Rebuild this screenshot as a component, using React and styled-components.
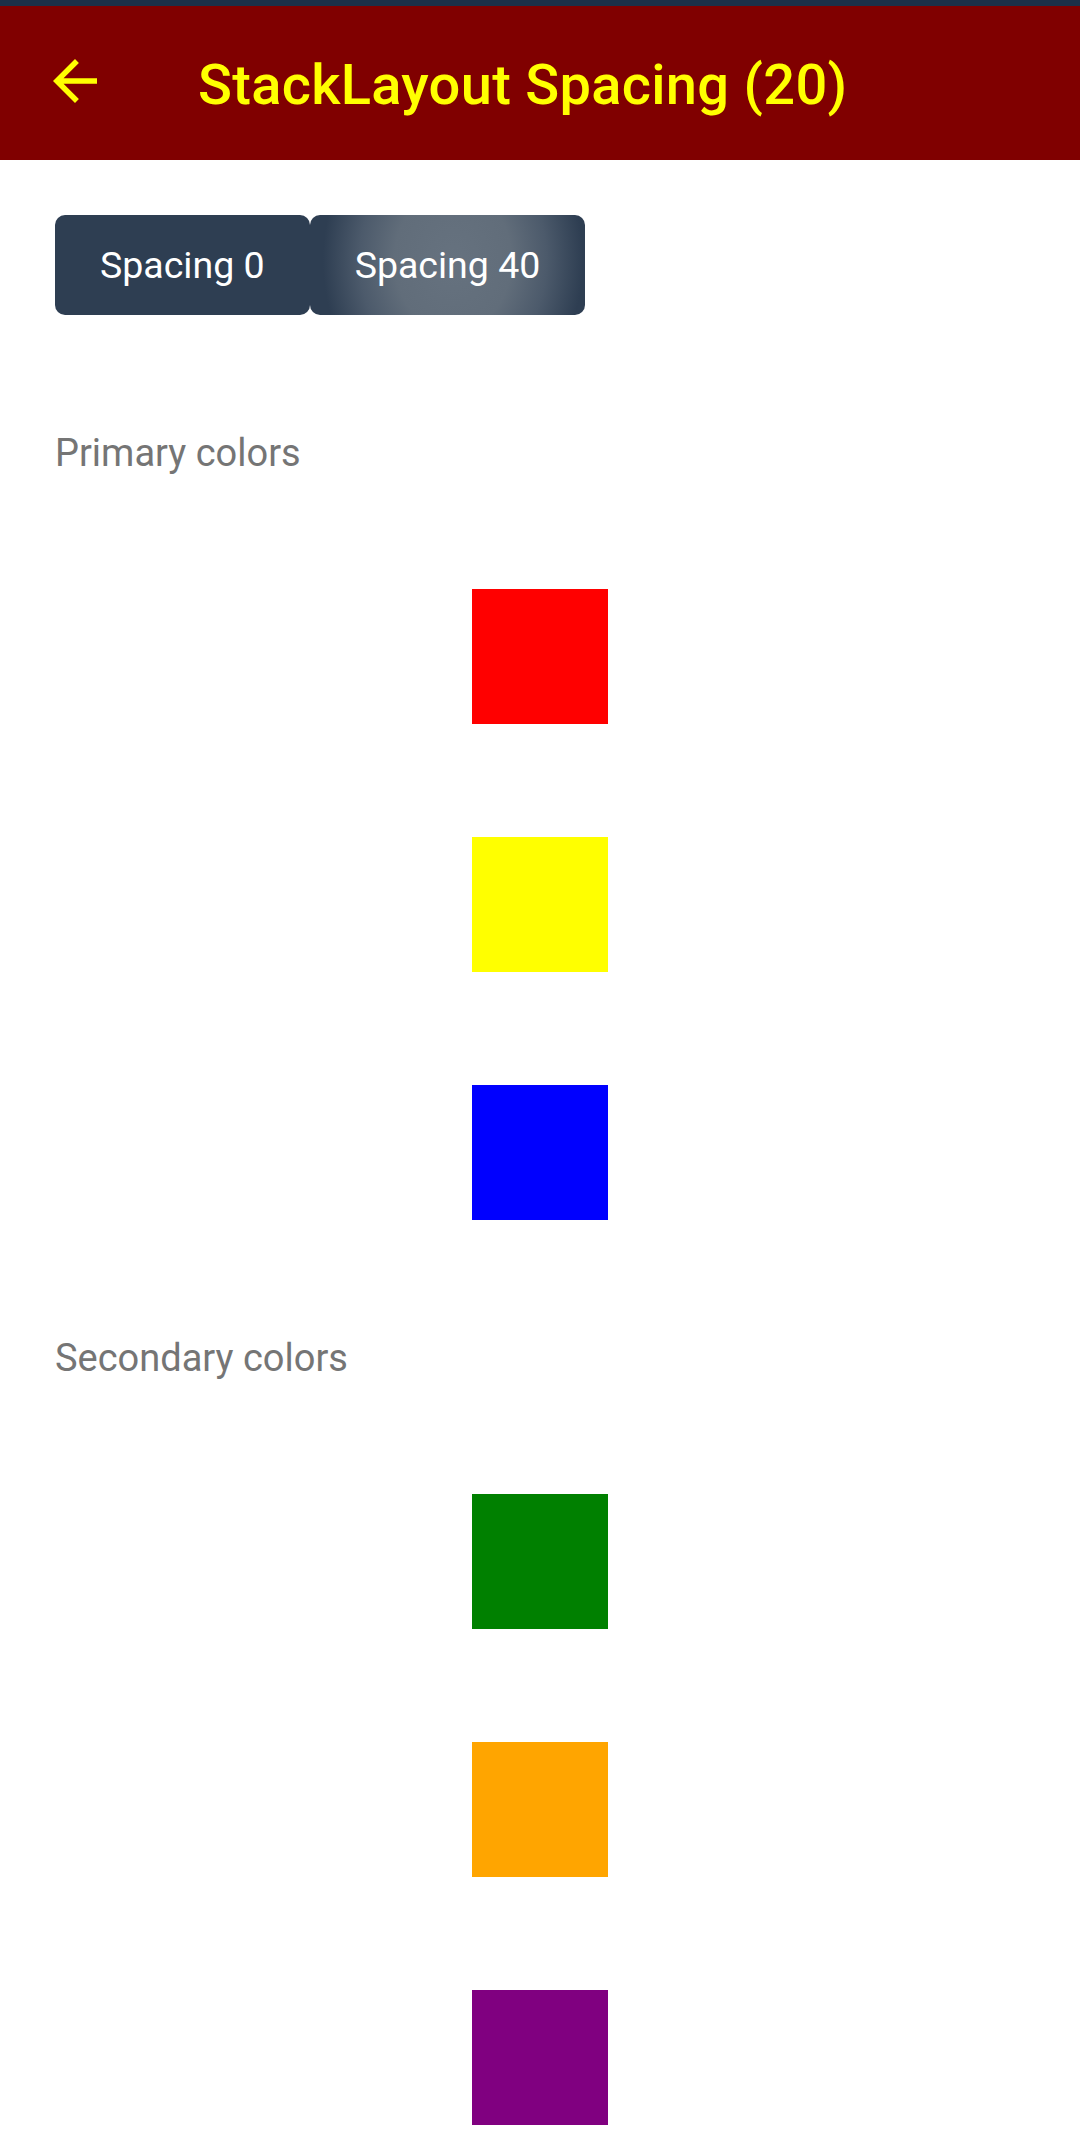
import styled, { createGlobalStyle } from 'styled-components';

const GlobalStyle = createGlobalStyle`
  html, body {
    margin: 0;
    padding: 0;
    background: #ffffff;
    font-family: Roboto, "Noto Sans", "Liberation Sans", sans-serif;
  }
`

const Page = styled.div`
  width: 1080px;
  min-height: 2155px;
  background: #fff;
`

const StatusStrip = styled.div`
  height: 6px;
  background: #1c3049;
`

const Toolbar = styled.header`
  height: 154px;
  background: #800000;
  display: flex;
  align-items: center;
`

const BackButton = styled.div`
  width: 66px;
  height: 66px;
  margin-left: 42px;
  margin-top: -4px;
  display: flex;
  align-items: center;
  justify-content: center;
`

const Title = styled.h1`
  margin: 4px 0 0 90px;
  color: #ffff00;
  font-size: 56px;
  font-weight: 500;
  letter-spacing: 0.3px;
  line-height: 1;
`

const Content = styled.main`
  padding: 55px 55px 0;
  display: flex;
  flex-direction: column;
  gap: 113px;
`

const ButtonRow = styled.div`
  display: flex;
  height: 100px;
`

const SpacingButton = styled.button`
  border: none;
  border-radius: 10px;
  padding: 0 45px;
  height: 100%;
  color: #fff;
  font-family: Roboto, "Liberation Sans", sans-serif;
  font-size: 37.5px;
  font-weight: 400;
  background: ${props => props.pressed
    ? 'radial-gradient(ellipse 130px 160px at 52% 45%, #66727f 0%, #616d7a 45%, #4c5a6b 72%, #2e3e52 100%)'
    : '#2e3e52'};
  cursor: pointer;
`

const Caption = styled.p`
  margin: 3px 0 0;
  color: #757575;
  font-size: 38px;
  line-height: 45px;
  font-weight: 400;
`

const Swatch = styled.div`
  width: 136px;
  height: 135px;
  align-self: center;
  background: ${props => props.color};
`

const primary = ['#ff0000', '#ffff00', '#0000ff']
const secondary = ['#008000', '#ffa500', '#800080']

const ArrowBack = () => (
  <svg width="66" height="66" viewBox="0 0 24 24" fill="#ffff00">
    <path d="M20 11H7.83l5.59-5.59L12 4l-8 8 8 8 1.41-1.41L7.83 13H20v-2z" />
  </svg>
)

const App = () => {
  return (
    <Page>
      <GlobalStyle />
      <StatusStrip />
      <Toolbar>
        <BackButton>
          <ArrowBack />
        </BackButton>
        <Title>StackLayout Spacing (20)</Title>
      </Toolbar>
      <Content>
        <ButtonRow>
          <SpacingButton>Spacing 0</SpacingButton>
          <SpacingButton pressed>Spacing 40</SpacingButton>
        </ButtonRow>
        <Caption>Primary colors</Caption>
        {primary.map(c => <Swatch key={c} color={c} />)}
        <Caption>Secondary colors</Caption>
        {secondary.map(c => <Swatch key={c} color={c} />)}
      </Content>
    </Page>
  )
}

export default App;
